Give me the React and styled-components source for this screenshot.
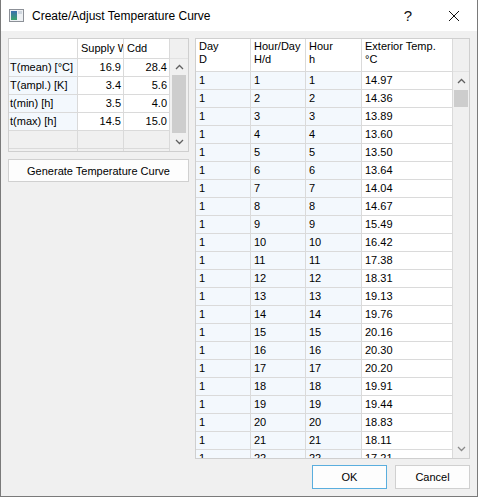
import React from "react";
import styled, { createGlobalStyle } from "styled-components";

const GlobalStyle = createGlobalStyle`
  html, body {
    margin: 0;
    padding: 0;
    background: #ffffff;
  }
  body {
    font-family: "Liberation Sans", Arial, sans-serif;
    font-size: 11px;
    color: #000;
  }
  * {
    box-sizing: border-box;
  }
`;

const Window = styled.div`
  width: 478px;
  height: 497px;
  border: 1px solid #7a7a7a;
  border-top: none;
  background: #f0f0f0;
  display: flex;
  flex-direction: column;
`;

const TitleBar = styled.div`
  height: 31px;
  flex: none;
  background: #fff;
  display: flex;
  align-items: center;
`;

const AppIcon = styled.svg`
  margin-left: 8px;
  flex: none;
`;

const Title = styled.div`
  margin-left: 8px;
  flex: 1;
  font-size: 12px;
  color: #000;
`;

const CaptionButton = styled.div`
  width: 46px;
  height: 31px;
  display: flex;
  align-items: center;
  justify-content: center;
  font-size: 15px;
  color: #111;
`;

const Body = styled.div`
  flex: 1;
  display: flex;
  gap: 6px;
  padding: 7px;
`;

const Panel = styled.div`
  width: ${p => p.$width}px;
  display: flex;
  flex-direction: column;
  gap: ${p => p.$gap}px;
`;

const TableFrame = styled.div`
  height: ${p => p.$height}px;
  border: 1px solid #cfcfcf;
  background: #fff;
  display: flex;
  overflow: hidden;
  flex: none;
`;

const Viewport = styled.div`
  flex: 1;
  overflow: hidden;
  display: flex;
  flex-direction: column;
`;

const Row = styled.div`
  display: grid;
  grid-template-columns: ${p => p.$cols};
  flex: none;
`;

const Cell = styled.div`
  height: ${p => p.$h}px;
  line-height: ${p => (p.$multi ? '13px' : `${p.$h - 1}px`)};
  padding: ${p => (p.$multi ? '1px 3px 0' : p.$right ? '0 2px 0 1px' : `0 2px 0 ${p.$pad ?? 3}px`)};
  text-align: ${p => (p.$right ? 'right' : 'left')};
  background: ${p => p.$bg || '#fff'};
  border-right: 1px solid #dadada;
  border-bottom: 1px solid #dadada;
  white-space: ${p => (p.$multi ? 'pre' : 'nowrap')};
  overflow: hidden;
`;

const ScrollBar = styled.div`
  width: ${p => p.$width}px;
  flex: none;
  background: #f0f0f0;
  display: flex;
  flex-direction: column;
`;

const Corner = styled.div`
  height: ${p => p.$h}px;
  flex: none;
  border-bottom: 1px solid #e2e2e2;
`;

const ArrowButton = styled.div`
  height: 18px;
  flex: none;
  display: flex;
  align-items: center;
  justify-content: center;
`;

const Track = styled.div`
  flex: 1;
  display: flex;
  flex-direction: column;
`;

const Thumb = styled.div`
  height: ${p => (p.$h ? `${p.$h}px` : '100%')};
  margin: 0 ${p => p.$inset}px;
  background: #cdcdcd;
`;

const Button = styled.div`
  height: ${p => p.$h}px;
  width: ${p => (p.$w ? `${p.$w}px` : 'auto')};
  flex: none;
  display: flex;
  align-items: center;
  justify-content: center;
  background: #fdfdfd;
  border: 1px solid ${p => (p.$primary ? '#5aaede' : '#d0d0d0')};
  font-size: 11px;
  color: #000;
`;

const ButtonRow = styled.div`
  display: flex;
  justify-content: flex-end;
  gap: 8px;
`;

const Chevron = ({ up, color = '#606060' }) => (
  <svg width="9" height="6" viewBox="0 0 9 6">
    <polyline
      points={up ? '1,5 4.5,1.5 8,5' : '1,1 4.5,4.5 8,1'}
      fill="none"
      stroke={color}
      strokeWidth="1.3"
    />
  </svg>
);

const TINT = '#f3f8fd';

const curveParams = [
  ['T(mean) [°C]', '16.9', '28.4'],
  ['T(ampl.) [K]', '3.4', '5.6'],
  ['t(min) [h]', '3.5', '4.0'],
  ['t(max) [h]', '14.5', '15.0'],
];

const temps = [
  '14.97', '14.36', '13.89', '13.60', '13.50', '13.64', '14.04', '14.67',
  '15.49', '16.42', '17.38', '18.31', '19.13', '19.76', '20.16', '20.30',
  '20.20', '19.91', '19.44', '18.83', '18.11', '17.21',
];

const LEFT_COLS = '69px 46px 46px';
const RIGHT_COLS = '55px 55px 56px 91px';

function ParamTable() {
  return (
    <TableFrame $height={114}>
      <Viewport>
        <Row $cols={LEFT_COLS}>
          <Cell $h={20} />
          <Cell $h={20}>Supply W</Cell>
          <Cell $h={20}>Cdd</Cell>
        </Row>
        {curveParams.map(([label, a, b]) => (
          <Row key={label} $cols={LEFT_COLS}>
            <Cell $h={18} $bg={TINT} $pad={1}>{label}</Cell>
            <Cell $h={18} $right>{a}</Cell>
            <Cell $h={18} $right>{b}</Cell>
          </Row>
        ))}
        {[0, 1].map(i => (
          <Row key={i} $cols={LEFT_COLS}>
            <Cell $h={18} $bg="#f0f0f0" />
            <Cell $h={18} $bg="#f0f0f0" />
            <Cell $h={18} $bg="#f0f0f0" />
          </Row>
        ))}
      </Viewport>
      <ScrollBar $width={18}>
        <Corner $h={20} />
        <ArrowButton style={{ height: 16 }}><Chevron up /></ArrowButton>
        <Track>
          <Thumb $inset={2} />
        </Track>
        <ArrowButton><Chevron /></ArrowButton>
      </ScrollBar>
    </TableFrame>
  );
}

function CurveTable() {
  return (
    <TableFrame $height={421}>
      <Viewport>
        <Row $cols={RIGHT_COLS}>
          <Cell $h={33} $multi>{'Day\nD'}</Cell>
          <Cell $h={33} $multi>{'Hour/Day\nH/d'}</Cell>
          <Cell $h={33} $multi>{'Hour\nh'}</Cell>
          <Cell $h={33} $multi>{'Exterior Temp.\n°C'}</Cell>
        </Row>
        {temps.map((t, i) => (
          <Row key={i} $cols={RIGHT_COLS}>
            <Cell $h={18} $bg={TINT}>1</Cell>
            <Cell $h={18} $bg={TINT}>{i + 1}</Cell>
            <Cell $h={18} $bg={TINT}>{i + 1}</Cell>
            <Cell $h={18}>{t}</Cell>
          </Row>
        ))}
      </Viewport>
      <ScrollBar $width={16}>
        <Corner $h={33} />
        <ArrowButton><Chevron up /></ArrowButton>
        <Track>
          <Thumb $inset={1} $h={17} />
        </Track>
        <ArrowButton><Chevron color="#8a8a8a" /></ArrowButton>
      </ScrollBar>
    </TableFrame>
  );
}

export default function App() {
  return (
    <>
      <GlobalStyle />
      <Window>
        <TitleBar>
          <AppIcon width="15" height="13" viewBox="0 0 15 13">
            <defs>
              <linearGradient id="ico" x1="0" y1="0" x2="0" y2="1">
                <stop offset="0" stopColor="#3a6fb0" />
                <stop offset="1" stopColor="#3aa36a" />
              </linearGradient>
            </defs>
            <rect x="0.5" y="0.5" width="14" height="12" fill="#eef1f4" stroke="#8c9097" />
            <rect x="2" y="2" width="6" height="9" fill="url(#ico)" />
            <rect x="9" y="2" width="4" height="3" fill="#cfd6de" />
          </AppIcon>
          <Title>Create/Adjust Temperature Curve</Title>
          <CaptionButton>?</CaptionButton>
          <CaptionButton>
            <svg width="12" height="12" viewBox="0 0 12 12">
              <path d="M1 1 L11 11 M11 1 L1 11" stroke="#111" strokeWidth="1" fill="none" />
            </svg>
          </CaptionButton>
        </TitleBar>
        <Body>
          <Panel $width={181} $gap={7}>
            <ParamTable />
            <Button $h={23}>Generate Temperature Curve</Button>
          </Panel>
          <Panel $width={275} $gap={6}>
            <CurveTable />
            <ButtonRow>
              <Button $h={24} $w={75} $primary>OK</Button>
              <Button $h={24} $w={75}>Cancel</Button>
            </ButtonRow>
          </Panel>
        </Body>
      </Window>
    </>
  );
}
